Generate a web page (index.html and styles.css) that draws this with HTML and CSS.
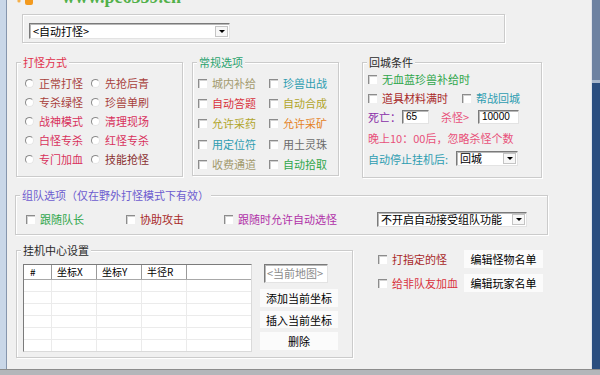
FILE: index.html
```html
<!DOCTYPE html>
<html lang="zh-CN">
<head>
    <meta charset="UTF-8">
    <title>自动打怪设置</title>
    <link rel="stylesheet" href="styles.css">
</head>
<body>
<div class="window">
    <div class="main">
        <div class="frame-left"></div>
        <div class="client">
            <!-- 顶部水印 -->
            <div class="logo">
                <svg class="logo-icon" width="20" height="8" viewBox="0 0 20 8">
                    <circle cx="2" cy="1" r="1.6" fill="#f6b04a"/>
                    <rect x="8" y="-4" width="8" height="9" rx="2" fill="#f39a1e"/>
                </svg>
                <span class="logo-text">www.pc6359.cn</span>
            </div>

            <div class="mode-box">
                <div class="combo combo-mode">
                    <span class="combo-text">&lt;自动打怪&gt;</span>
                    <span class="combo-btn"></span>
                </div>
            </div>

            <div class="row-top">
                <!-- 打怪方式 -->
                <div class="group g-fight">
                    <span class="group-title t-red">打怪方式</span>
                    <div class="radio-grid">
                        <label class="opt c-brown"><span class="radio"></span>正常打怪</label>
                        <label class="opt c-brown"><span class="radio"></span>先抢后青</label>
                        <label class="opt c-brown"><span class="radio"></span>专杀绿怪</label>
                        <label class="opt c-brown"><span class="radio"></span>珍兽单刷</label>
                        <label class="opt c-rose"><span class="radio"></span>战神模式</label>
                        <label class="opt c-rose"><span class="radio"></span>清理现场</label>
                        <label class="opt c-rose"><span class="radio"></span>白怪专杀</label>
                        <label class="opt c-rose"><span class="radio"></span>红怪专杀</label>
                        <label class="opt c-rose"><span class="radio"></span>专门加血</label>
                        <label class="opt c-maroon"><span class="radio"></span>技能抢怪</label>
                    </div>
                </div>

                <!-- 常规选项 -->
                <div class="group g-normal">
                    <span class="group-title t-green">常规选项</span>
                    <div class="check-grid">
                        <label class="opt c-khaki"><span class="check"></span>城内补给</label>
                        <label class="opt c-teal"><span class="check"></span>珍兽出战</label>
                        <label class="opt c-red"><span class="check"></span>自动答题</label>
                        <label class="opt c-olive"><span class="check"></span>自动合成</label>
                        <label class="opt c-olive"><span class="check"></span>允许采药</label>
                        <label class="opt c-orange"><span class="check"></span>允许采矿</label>
                        <label class="opt c-teal"><span class="check"></span>用定位符</label>
                        <label class="opt c-gray"><span class="check"></span>用土灵珠</label>
                        <label class="opt c-khaki"><span class="check"></span>收费通道</label>
                        <label class="opt c-green"><span class="check"></span>自动拾取</label>
                    </div>
                </div>

                <!-- 回城条件 -->
                <div class="group g-return">
                    <span class="group-title t-dark">回城条件</span>
                    <div class="ret-body">
                        <div class="ret-row h19">
                            <label class="opt c-green"><span class="check"></span>无血蓝珍兽补给时</label>
                        </div>
                        <div class="ret-row h19">
                            <label class="opt c-darkred w94"><span class="check"></span>道具材料满时</label>
                            <label class="opt c-teal"><span class="check"></span>帮战回城</label>
                        </div>
                        <div class="ret-row h19">
                            <span class="lbl-death c-purple">死亡：</span>
                            <span class="field f-death">65</span>
                            <span class="lbl-kill c-pink">杀怪&gt;</span>
                            <span class="field f-kill">10000</span>
                        </div>
                        <div class="ret-row h22">
                            <span class="c-pink">晚上10：00后，忽略杀怪个数</span>
                        </div>
                        <div class="ret-row h20">
                            <span class="lbl-stop c-teal">自动停止挂机后:</span>
                            <div class="combo combo-stop">
                                <span class="combo-text">回城</span>
                                <span class="combo-btn"></span>
                            </div>
                        </div>
                    </div>
                </div>
            </div>

            <!-- 组队选项 -->
            <div class="group g-team">
                <span class="group-title t-violet">组队选项（仅在野外打怪模式下有效）</span>
                <div class="team-row">
                    <label class="opt c-green w100"><span class="check"></span>跟随队长</label>
                    <label class="opt c-darkred w98"><span class="check"></span>协助攻击</label>
                    <label class="opt c-magenta w153"><span class="check"></span>跟随时允许自动选怪</label>
                    <div class="combo combo-team">
                        <span class="combo-text">不开启自动接受组队功能</span>
                        <span class="combo-btn"></span>
                    </div>
                </div>
            </div>

            <div class="row-bottom">
                <!-- 挂机中心设置 -->
                <div class="group g-center">
                    <span class="group-title t-dark">挂机中心设置</span>
                    <div class="center-body">
                        <div class="listview">
                            <div class="lv-head">
                                <span class="col col-num">#</span>
                                <span class="col">坐标X</span>
                                <span class="col">坐标Y</span>
                                <span class="col">半径R</span>
                                <span class="col col-fill"></span>
                            </div>
                            <div class="lv-body">
                                <span class="col col-num"></span>
                                <span class="col"></span>
                                <span class="col"></span>
                                <span class="col"></span>
                                <span class="col col-fill"></span>
                            </div>
                        </div>
                        <div class="tools">
                            <span class="field map-field">&lt;当前地图&gt;</span>
                            <span class="btn btn-add">添加当前坐标</span>
                            <span class="btn btn-insert">插入当前坐标</span>
                            <span class="btn btn-del">删除</span>
                        </div>
                    </div>
                </div>

                <div class="side">
                    <div class="side-row">
                        <label class="opt c-darkred"><span class="check"></span>打指定的怪</label>
                        <span class="btn btn-wide">编辑怪物名单</span>
                    </div>
                    <div class="side-row">
                        <label class="opt c-red"><span class="check"></span>给非队友加血</label>
                        <span class="btn btn-wide">编辑玩家名单</span>
                    </div>
                </div>
            </div>
        </div>
        <div class="frame-right"></div>
    </div>
    <div class="bottom-bar"></div>
</div>
</body>
</html>
```

FILE: styles.css
```css
* {
    box-sizing: border-box;
}
body {
    margin: 0;
    background: #f0f0f0;
    font-family: "Noto Sans CJK SC", "Liberation Sans", sans-serif;
    font-size: 11px;
    color: #000;
}
.window {
    width: 600px;
    height: 375px;
    display: flex;
    flex-direction: column;
    overflow: hidden;
}
.main {
    height: 369px;
    display: flex;
}
.frame-left {
    width: 7px;
    background: #c9d7e8;
    border-right: 1px solid #8696ad;
}
.client {
    flex: 1;
    background: #f0f0f0;
}
.frame-right {
    width: 9px;
    border-left: 1px solid #dfe4ea;
    background: linear-gradient(#6d82a1 0 80px, #a9b8cc 80px 83px, #2a4e7f 83px);
}
.bottom-bar {
    height: 6px;
    background: #b4b6ba;
    border-top: 1px solid #8c8c8c;
}

/* 水印 */
.logo {
    height: 14px;
    display: flex;
    overflow: hidden;
}
.logo-icon {
    margin-left: 10px;
    flex: none;
}
.logo-text {
    margin: -12px 0 0 25px;
    font: bold 18px/18px "Liberation Serif", serif;
    color: #52b04a;
    white-space: nowrap;
}

/* 通用控件 */
.group {
    position: relative;
    border: 1px solid #cbcbcb;
    box-shadow: inset 1px 1px 0 #fff, 1px 1px 0 #fff;
}
.group-title {
    position: absolute;
    top: -7px;
    left: 4px;
    padding: 0 2px;
    background: #f0f0f0;
    line-height: 13px;
    white-space: nowrap;
}
.opt {
    display: flex;
    align-items: center;
    gap: 5px;
    white-space: nowrap;
    line-height: 13px;
}
.radio {
    width: 9px;
    height: 9px;
    flex: none;
    border-radius: 50%;
    background: #fff;
    border: 1px solid;
    border-color: #8a8a8a #e6e6e6 #e6e6e6 #8a8a8a;
}
.check {
    width: 9px;
    height: 9px;
    flex: none;
    background: #fff;
    border-top: 1px solid #8c8c8c;
    border-left: 1px solid #8c8c8c;
    box-shadow: inset 1px 1px 0 #d2d2d2;
}
.combo {
    display: flex;
    align-items: center;
    background: #fff;
    border: 1px solid;
    border-color: #7a7a7a #e3e3e3 #e3e3e3 #7a7a7a;
    box-shadow: inset 1px 1px 0 #b8b8b8;
    padding-left: 3px;
}
.combo-text {
    flex: 1;
    white-space: nowrap;
    line-height: 13px;
}
.combo-btn {
    width: 13px;
    height: 11px;
    margin-right: 1px;
    flex: none;
    border: 1px solid #c4c4c4;
    background: #f7f7f7;
    display: flex;
    align-items: center;
    justify-content: center;
}
.combo-btn::after {
    content: "";
    border-left: 3px solid transparent;
    border-right: 3px solid transparent;
    border-top: 3px solid #000;
}
.field {
    display: block;
    height: 14px;
    background: #fff;
    border: 1px solid;
    border-color: #7a7a7a #e3e3e3 #e3e3e3 #7a7a7a;
    box-shadow: inset 1px 1px 0 #b8b8b8;
    font: 10px/12px "Liberation Sans", sans-serif;
    padding-left: 3px;
    flex: none;
}
.btn {
    display: flex;
    align-items: center;
    justify-content: center;
    height: 18px;
    background: #fbfbfb;
    white-space: nowrap;
}

/* 顶部模式 */
.mode-box {
    margin-left: 15px;
    width: 483px;
    height: 29px;
    border: 1px solid #cbcbcb;
    box-shadow: inset 1px 1px 0 #fff, 1px 1px 0 #fff;
    padding: 8px 0 0 6px;
}
.combo-mode {
    width: 201px;
    height: 16px;
}

/* 第一行分组 */
.row-top {
    display: flex;
    align-items: flex-start;
    margin-top: 19px;
}
.g-fight {
    margin-left: 9px;
    width: 167px;
    height: 115px;
}
.radio-grid {
    display: grid;
    grid-template-columns: 66px 66px;
    grid-auto-rows: 18.8px;
    align-items: center;
    padding: 11.5px 0 0 8px;
}
.g-normal {
    margin-left: 9px;
    width: 147px;
    height: 114px;
}
.check-grid {
    display: grid;
    grid-template-columns: 71px 71px;
    grid-auto-rows: 20.4px;
    align-items: center;
    padding: 10px 0 0 5px;
}
.g-return {
    margin-left: 23px;
    width: 180px;
    height: 116px;
}
.ret-body {
    padding: 6.5px 0 0 5px;
}
.ret-row {
    display: flex;
    align-items: center;
    white-space: nowrap;
}
.h19 { height: 19px; }
.h20 { height: 20px; }
.h22 { height: 22px; }
.w94 { width: 94px; }
.lbl-death { width: 34px; }
.f-death { width: 27px; }
.lbl-kill {
    width: 37px;
    margin-left: 12px;
}
.f-kill { width: 41px; }
.lbl-stop { width: 88px; }
.combo-stop {
    width: 62px;
    height: 15px;
}

/* 组队选项 */
.g-team {
    margin: 17px 0 0 8px;
    width: 533px;
    height: 40px;
}
.team-row {
    display: flex;
    align-items: center;
    height: 16px;
    margin: 15px 0 0 10px;
}
.w100 { width: 100px; }
.w98 { width: 98px; }
.w153 { width: 153px; }
.combo-team {
    width: 150px;
    height: 15px;
}

/* 挂机中心 */
.row-bottom {
    display: flex;
    align-items: flex-start;
    margin-top: 15px;
}
.g-center {
    margin-left: 9px;
    width: 337px;
    height: 108px;
}
.center-body {
    display: flex;
    padding: 13px 0 0 6px;
}
.listview {
    width: 229px;
    height: 88px;
    background: #fff;
    border: 1px solid;
    border-color: #7b7b7b #dadada #dadada #7b7b7b;
    display: flex;
    flex-direction: column;
}
.lv-head,
.lv-body {
    display: flex;
}
.lv-head {
    height: 15px;
    border-bottom: 1px solid #a8a8a8;
}
.lv-head .col {
    width: 45px;
    border-right: 1px solid #9a9a9a;
    box-shadow: inset -1px 0 0 #fff;
    padding-left: 5px;
    font-size: 10px;
    line-height: 14px;
    white-space: nowrap;
}
.lv-body {
    flex: 1;
    background: repeating-linear-gradient(to bottom, #fff 0 11px, #ebebeb 11px 12px);
}
.lv-body .col {
    width: 45px;
    border-right: 1px solid #ebebeb;
}
.lv-head .col-num,
.lv-body .col-num {
    width: 28px;
    padding-left: 6px;
}
.lv-head .col-fill,
.lv-body .col-fill {
    flex: 1;
    border-right: none;
    box-shadow: none;
}
.tools {
    display: flex;
    flex-direction: column;
    width: 78px;
    margin-left: 8px;
}
.map-field {
    width: 64px;
    height: 19px;
    margin-left: 4px;
    font: 11px/17px "Noto Sans CJK SC", sans-serif;
    color: #8a8a8a;
    padding-left: 2px;
}
.btn-add { margin-top: 6px; }
.btn-insert {
    margin-top: 4px;
    height: 17px;
}
.btn-del { margin-top: 4px; }

/* 右侧名单 */
.side {
    margin-left: 25px;
    display: flex;
    flex-direction: column;
    gap: 6px;
}
.side-row {
    display: flex;
    align-items: center;
    height: 18px;
}
.side-row .opt {
    width: 86px;
}
.btn-wide {
    width: 79px;
}

/* 文字颜色 */
.t-red { color: #e0304c; }
.t-green { color: #2aa36e; }
.t-dark { color: #2a2a2a; }
.t-violet { color: #6d5ccf; }
.c-brown { color: #a8403c; }
.c-rose { color: #d8305c; }
.c-maroon { color: #8a3030; }
.c-khaki { color: #a39a6e; }
.c-teal { color: #2e9db0; }
.c-red { color: #d8303c; }
.c-olive { color: #b0a52a; }
.c-orange { color: #e5821f; }
.c-gray { color: #6a6a6a; }
.c-green { color: #2fa64a; }
.c-darkred { color: #a82828; }
.c-purple { color: #8a2fa8; }
.c-pink { color: #e8507a; }
.c-magenta { color: #b030a8; }
```
